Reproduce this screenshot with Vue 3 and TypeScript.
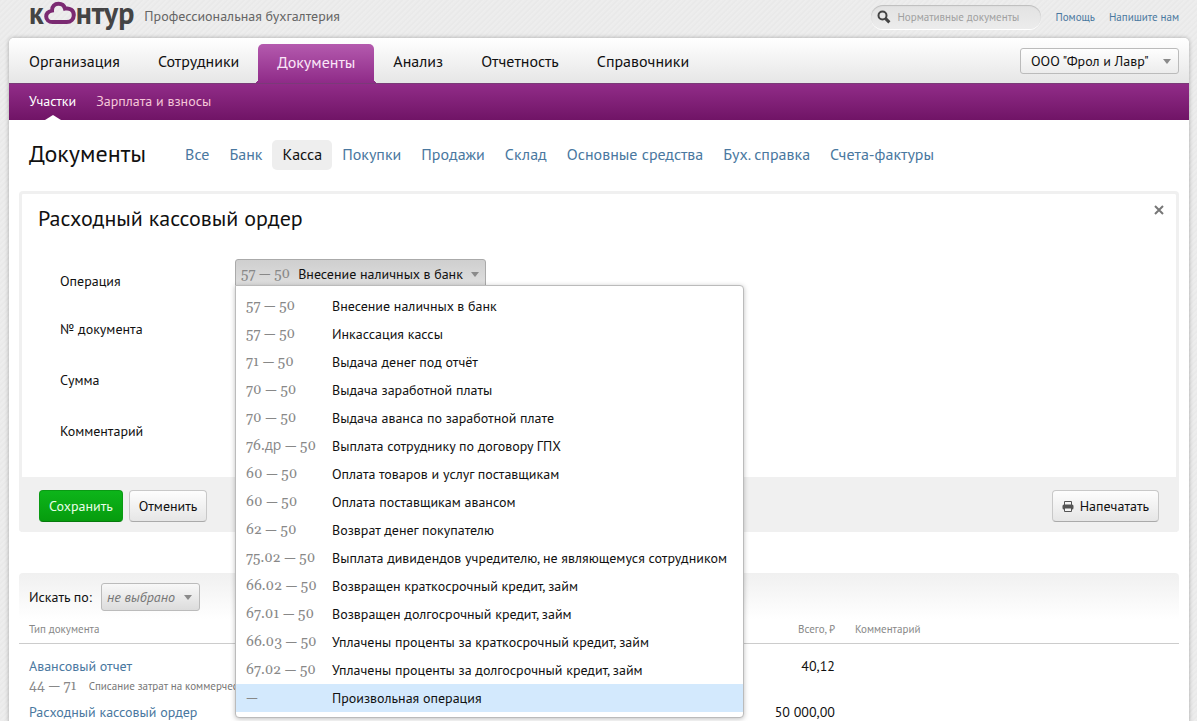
<script setup lang="ts">
import { ref } from 'vue'

interface Operation {
  code: string
  title: string
}

interface Row {
  type: string
  code?: string
  note?: string
  total: string
}

const mainNav = ['Организация', 'Сотрудники', 'Документы', 'Анализ', 'Отчетность', 'Справочники']
const activeNav = ref('Документы')

const sections = [
  'Все',
  'Банк',
  'Касса',
  'Покупки',
  'Продажи',
  'Склад',
  'Основные средства',
  'Бух. справка',
  'Счета-фактуры',
]
const activeSection = ref('Касса')

const operations: Operation[] = [
  { code: '57 — 50', title: 'Внесение наличных в банк' },
  { code: '57 — 50', title: 'Инкассация кассы' },
  { code: '71 — 50', title: 'Выдача денег под отчёт' },
  { code: '70 — 50', title: 'Выдача заработной платы' },
  { code: '70 — 50', title: 'Выдача аванса по заработной плате' },
  { code: '76.др — 50', title: 'Выплата сотруднику по договору ГПХ' },
  { code: '60 — 50', title: 'Оплата товаров и услуг поставщикам' },
  { code: '60 — 50', title: 'Оплата поставщикам авансом' },
  { code: '62 — 50', title: 'Возврат денег покупателю' },
  { code: '75.02 — 50', title: 'Выплата дивидендов учредителю, не являющемуся сотрудником' },
  { code: '66.02 — 50', title: 'Возвращен краткосрочный кредит, займ' },
  { code: '67.01 — 50', title: 'Возвращен долгосрочный кредит, займ' },
  { code: '66.03 — 50', title: 'Уплачены проценты за краткосрочный кредит, займ' },
  { code: '67.02 — 50', title: 'Уплачены проценты за долгосрочный кредит, займ' },
  { code: '—', title: 'Произвольная операция' },
]
const selected = ref(0)
const hovered = ref(14)
const menuOpen = ref(true)

function choose(index: number) {
  selected.value = index
  menuOpen.value = false
}

const fields = [
  { id: 'number', label: '№ документа' },
  { id: 'sum', label: 'Сумма' },
  { id: 'comment', label: 'Комментарий' },
]

const rows: Row[] = [
  { type: 'Авансовый отчет', code: '44 — 71', note: 'Списание затрат на коммерческие', total: '40,12' },
  { type: 'Расходный кассовый ордер', total: '50 000,00' },
]
</script>

<template>
  <div class="app">
    <header class="top">
      <a class="logo" href="#" aria-label="контур">
        <span>к</span>
        <svg class="cloud" viewBox="0 0 32 24" aria-hidden="true">
          <path
            d="M8.5 22 C4.5 22 2.2 19.4 2.2 16.4 C2.2 13.4 4.6 11.4 8 10.6 C7.8 6.4 10.6 3.8 14.6 3.8 C18 3.8 20.2 5.8 21 8.6 C25.8 7.6 29.8 10.4 29.8 15 C29.8 19.2 26.8 22 22.8 22 Z"
          />
        </svg>
        <span>нтур</span>
      </a>
      <span class="product">Профессиональная бухгалтерия</span>
      <form class="search" role="search" @submit.prevent>
        <svg viewBox="0 0 14 14" aria-hidden="true">
          <circle cx="5.5" cy="5.5" r="4" />
          <path d="M8.6 8.6 L12.4 12.4" />
        </svg>
        <input type="search" placeholder="Нормативные документы" aria-label="Нормативные документы" />
      </form>
      <nav class="help">
        <a href="#">Помощь</a>
        <a href="#">Напишите нам</a>
      </nav>
    </header>

    <div class="page">
      <div class="mainbar">
        <nav class="mainnav">
          <a
            v-for="item in mainNav"
            :key="item"
            href="#"
            :class="{ active: item === activeNav }"
            @click.prevent="activeNav = item"
            >{{ item }}</a
          >
        </nav>
        <span class="dropdown company">
          <select aria-label="Организация">
            <option>ООО "Фрол и Лавр"</option>
          </select>
        </span>
      </div>

      <nav class="subnav">
        <a href="#" class="current">Участки</a>
        <a href="#">Зарплата и взносы</a>
      </nav>

      <main>
        <div class="titlebar">
          <h1>Документы</h1>
          <nav class="sections">
            <a
              v-for="item in sections"
              :key="item"
              href="#"
              :class="{ active: item === activeSection }"
              @click.prevent="activeSection = item"
              >{{ item }}</a
            >
          </nav>
        </div>

        <section class="card">
          <div class="cardhead">
            <h2>Расходный кассовый ордер</h2>
            <button type="button" class="close" aria-label="Закрыть">
              <svg viewBox="0 0 10 10" aria-hidden="true"><path d="M1 1 L9 9 M9 1 L1 9" /></svg>
            </button>
          </div>

          <div class="fields">
            <label id="operation-label" for="operation">Операция</label>
            <div class="combo">
              <button
                id="operation"
                type="button"
                class="trigger"
                aria-haspopup="listbox"
                :aria-expanded="menuOpen"
                @click="menuOpen = !menuOpen"
              >
                <span class="code">{{ operations[selected].code }}</span>
                <span>{{ operations[selected].title }}</span>
              </button>
              <ul v-if="menuOpen" class="menu" role="listbox" aria-labelledby="operation-label">
                <li
                  v-for="(op, i) in operations"
                  :key="i"
                  role="option"
                  :aria-selected="i === selected"
                  :class="{ hovered: i === hovered }"
                  @mouseenter="hovered = i"
                  @click="choose(i)"
                >
                  <span class="code">{{ op.code }}</span>
                  <span>{{ op.title }}</span>
                </li>
              </ul>
            </div>
            <template v-for="field in fields" :key="field.id">
              <label :for="field.id">{{ field.label }}</label>
              <input :id="field.id" type="text" />
            </template>
          </div>

          <footer class="actions">
            <button type="button" class="btn save">Сохранить</button>
            <button type="button" class="btn">Отменить</button>
            <button type="button" class="btn print">
              <svg viewBox="0 0 12 12" aria-hidden="true">
                <path class="line" d="M2.5 5 V1.5 H9.5 V5" />
                <rect x="0.5" y="4.5" width="11" height="5" rx="1.5" />
                <path class="paper" d="M2.5 8 H9.5 V11.5 H2.5 Z" />
              </svg>
              <span>Напечатать</span>
            </button>
          </footer>
        </section>

        <div class="filter">
          <label for="filter">Искать по:</label>
          <span class="dropdown criterion">
            <select id="filter">
              <option>не выбрано</option>
            </select>
          </span>
        </div>

        <table>
          <thead>
            <tr>
              <th scope="col">Тип документа</th>
              <th scope="col" class="total">Всего, ₽</th>
              <th scope="col" class="remark">Комментарий</th>
            </tr>
          </thead>
          <tbody>
            <tr v-for="row in rows" :key="row.type">
              <td>
                <a href="#">{{ row.type }}</a>
                <div v-if="row.note" class="note">
                  <span class="code">{{ row.code }}</span>
                  <span>{{ row.note }}</span>
                </div>
              </td>
              <td class="total">{{ row.total }}</td>
              <td class="remark"></td>
            </tr>
          </tbody>
        </table>
      </main>
    </div>
  </div>
</template>

<style>
body {
  margin: 0;
  background-color: #ebebeb;
  background-image: repeating-linear-gradient(135deg, #e9e9e9 0, #e9e9e9 1px, #eeeeee 2px, #ebebeb 4px);
}
</style>

<style scoped>
.app {
  box-sizing: border-box;
  height: 100vh;
  overflow: hidden;
  display: flex;
  flex-direction: column;
  padding: 0 8px 0 9px;
  font: 14px/20px 'PT Sans', Roboto, 'Noto Sans', sans-serif;
  color: #111;
}
a {
  color: #4a78a0;
  text-decoration: none;
}
button,
input,
select {
  font: inherit;
  color: inherit;
}

/* top strip */
.top {
  display: flex;
  align-items: center;
  height: 38px;
  flex: none;
  padding: 0 10px 0 20px;
}
.logo {
  display: flex;
  align-items: flex-start;
  align-self: flex-start;
  font-size: 30px;
  line-height: 26px;
  font-weight: 700;
  color: #444;
}
.cloud {
  width: 32px;
  height: 24px;
}
.cloud path {
  fill: none;
  stroke: #7b2a72;
  stroke-width: 4;
}
.product {
  margin-left: 10px;
  margin-bottom: 6px;
  color: #666;
}
.search {
  box-sizing: border-box;
  display: flex;
  align-items: center;
  gap: 6px;
  width: 170px;
  height: 24px;
  margin-left: auto;
  margin-bottom: 4px;
  padding: 0 6px;
  border-radius: 12px;
  background: linear-gradient(#e2e2e2, #ececec);
  box-shadow: inset 0 1px 1px #bdbdbd, 0 1px 0 #fff;
}
.search svg {
  width: 14px;
  height: 14px;
  flex: none;
}
.search circle,
.search path {
  fill: none;
  stroke: #444;
  stroke-width: 2;
}
.search path {
  stroke-width: 3;
}
.search input {
  width: 100%;
  min-width: 0;
  padding: 0;
  border: 0;
  outline: 0;
  background: none;
  font-size: 11px;
  appearance: none;
}
.search input::placeholder {
  color: #a0a0a0;
  opacity: 1;
}
.help {
  display: flex;
  gap: 14px;
  margin-left: 14px;
  margin-bottom: 4px;
  font-size: 11px;
}

/* white page */
.page {
  flex: 1 0 auto;
  border-radius: 5px 5px 0 0;
  background: #fff;
  box-shadow: 0 0 4px rgba(0, 0, 0, 0.3);
}
.mainbar {
  display: flex;
  align-items: center;
  justify-content: space-between;
  height: 45px;
  padding: 0 10px 0 1px;
  border-radius: 5px 5px 0 0;
  background: linear-gradient(#fff, #e6e6e6);
}
.mainnav {
  display: flex;
  align-self: flex-end;
  font-size: 16px;
  line-height: 34px;
}
.mainnav a {
  height: 39px;
  padding: 0 19px;
  color: #111;
}
.mainnav a.active {
  position: relative;
  border-radius: 5px 5px 0 0;
  background: linear-gradient(#b45aae, #8f2b88);
  color: #fbe6f8;
  line-height: 36px;
}
.mainnav a.active::before,
.mainnav a.active::after {
  content: '';
  position: absolute;
  bottom: 0;
  width: 4px;
  height: 4px;
}
.mainnav a.active::before {
  right: 100%;
  background: radial-gradient(circle at 0 0, transparent 4px, #8f2b88 4px);
}
.mainnav a.active::after {
  left: 100%;
  background: radial-gradient(circle at 100% 0, transparent 4px, #8f2b88 4px);
}

.dropdown {
  position: relative;
  display: inline-flex;
}
.dropdown::after,
.trigger::after {
  content: '';
  border: 4px solid transparent;
  border-top: 5px solid #8a8a8a;
  border-bottom: 0;
}
.dropdown::after {
  position: absolute;
  right: 8px;
  top: 50%;
  margin-top: -2px;
  pointer-events: none;
}
.dropdown select {
  width: 100%;
  border: 1px solid #bbb;
  border-radius: 3px;
  appearance: none;
}
.company {
  width: 159px;
}
.company select {
  height: 26px;
  padding: 0 10px;
  background: linear-gradient(#fefefe, #ececec);
}

.subnav {
  display: flex;
  gap: 20px;
  height: 37px;
  padding: 0 20px;
  background: linear-gradient(#922d89, #701466);
  box-shadow: inset 0 1px 0 #7a3a78;
  line-height: 37px;
}
.subnav a {
  color: #f5c6d8;
}
.subnav .current {
  position: relative;
  color: #fff;
}
.subnav .current::after {
  content: '';
  position: absolute;
  left: 50%;
  bottom: 0;
  margin-left: -8px;
  border: 8px solid transparent;
  border-bottom: 5px solid #fff;
  border-top: 0;
}

/* content */
main {
  padding: 20px 10px 0;
}
.titlebar {
  display: flex;
  align-items: flex-start;
  gap: 29px;
  padding-left: 10px;
}
h1,
h2 {
  margin: 0;
  line-height: 28px;
  font-weight: 400;
}
h1 {
  font-size: 24px;
}
h2 {
  font-size: 22px;
}
.sections {
  display: flex;
  font-size: 16px;
  line-height: 28px;
}
.sections a {
  padding: 0 10px 2px;
  border-radius: 5px;
}
.sections a.active {
  background: #eee;
  color: #111;
}

.card {
  margin-top: 21px;
  border: 3px solid #f0f0f0;
  border-bottom: 0;
  border-radius: 4px;
}
.cardhead {
  display: flex;
  justify-content: space-between;
  align-items: flex-start;
  padding: 10px 11px 0 16px;
}
.close {
  width: 12px;
  height: 12px;
  padding: 1px;
  border: 0;
  background: none;
}
.close svg {
  display: block;
  width: 10px;
  height: 10px;
}
.close path {
  stroke: #777;
  stroke-width: 2;
}
.fields {
  display: grid;
  grid-template-columns: 175px 1fr;
  grid-template-rows: 46px 50px 52px 50px;
  align-items: center;
  padding: 27px 0 20px 38px;
}
.fields > label {
  padding-bottom: 2px;
}
.fields > input {
  box-sizing: border-box;
  width: 200px;
  height: 26px;
  margin-left: 10px;
  border: 1px solid #ccc;
}
.combo {
  position: relative;
  align-self: start;
}
.code {
  font: 14px/20px Georgia, Gelasio, 'Open Sans', 'Noto Sans', serif;
  font-variant-numeric: oldstyle-nums;
  color: #888;
}
.trigger {
  display: flex;
  align-items: center;
  gap: 8px;
  height: 27px;
  padding: 3px 6px 0 5px;
  border: 1px solid #aaa;
  border-radius: 3px 3px 0 0;
  background: linear-gradient(#cfcfcf, #dedede);
}
.menu {
  position: absolute;
  z-index: 2;
  top: 26px;
  left: 0;
  margin: 0;
  padding: 6px 0 5px;
  list-style: none;
  border: 1px solid #bbb;
  border-radius: 0 4px 4px 4px;
  background: #fff;
  box-shadow: 0 1px 5px rgba(0, 0, 0, 0.25);
  white-space: nowrap;
}
.menu li {
  display: grid;
  grid-template-columns: 86px 1fr;
  padding: 4px 16px 4px 10px;
}
.menu .hovered {
  background: #d3e9fd;
}

.actions {
  display: flex;
  gap: 6px;
  margin: 0 -3px;
  padding: 13px 20px 10px;
  border-radius: 0 0 4px 4px;
  background: #f0f0f0;
}
.btn {
  display: flex;
  align-items: center;
  gap: 6px;
  height: 32px;
  padding: 0 9px;
  border: 1px solid #c8c8c8;
  border-bottom-color: #aaa;
  border-radius: 4px;
  background: linear-gradient(#fdfdfd, #e6e6e6);
}
.save {
  border-color: #0a9a14;
  border-bottom-color: #067a0c;
  background: linear-gradient(#0db51a, #069c0e);
  color: #e8ffe8;
}
.print {
  margin-left: auto;
}
.print svg {
  width: 12px;
  height: 12px;
}
.print rect {
  fill: #555;
}
.print .line,
.print .paper {
  fill: #f4f4f4;
  stroke: #555;
}

.filter {
  display: flex;
  align-items: center;
  gap: 9px;
  margin-top: 41px;
  padding: 10px 10px 8px;
  border-radius: 4px 4px 0 0;
  background: linear-gradient(#f0f0f0, #fff);
}
.criterion {
  width: 99px;
}
.criterion select {
  height: 28px;
  padding: 0 5px;
  background: linear-gradient(#f8f8f8, #dcdcdc);
  font-style: italic;
  color: #777;
}

table {
  width: 100%;
  border-collapse: collapse;
  table-layout: fixed;
}
th,
td {
  padding: 0;
  text-align: left;
  vertical-align: top;
}
th {
  height: 20px;
  padding-bottom: 4px;
  border-bottom: 1px solid #ccc;
  font-size: 11px;
  line-height: 20px;
  font-weight: 400;
  color: #888;
}
td {
  padding-top: 10px;
  line-height: 24px;
}
tr + tr td {
  padding-top: 6px;
}
th:first-child,
td:first-child {
  padding-left: 10px;
}
.total {
  width: 200px;
  text-align: right;
}
.remark {
  width: 324px;
  padding-left: 20px;
}
.note {
  display: flex;
  gap: 12px;
  font-size: 11px;
  line-height: 16px;
  color: #777;
  white-space: nowrap;
}
.note .code {
  line-height: 16px;
}
</style>
